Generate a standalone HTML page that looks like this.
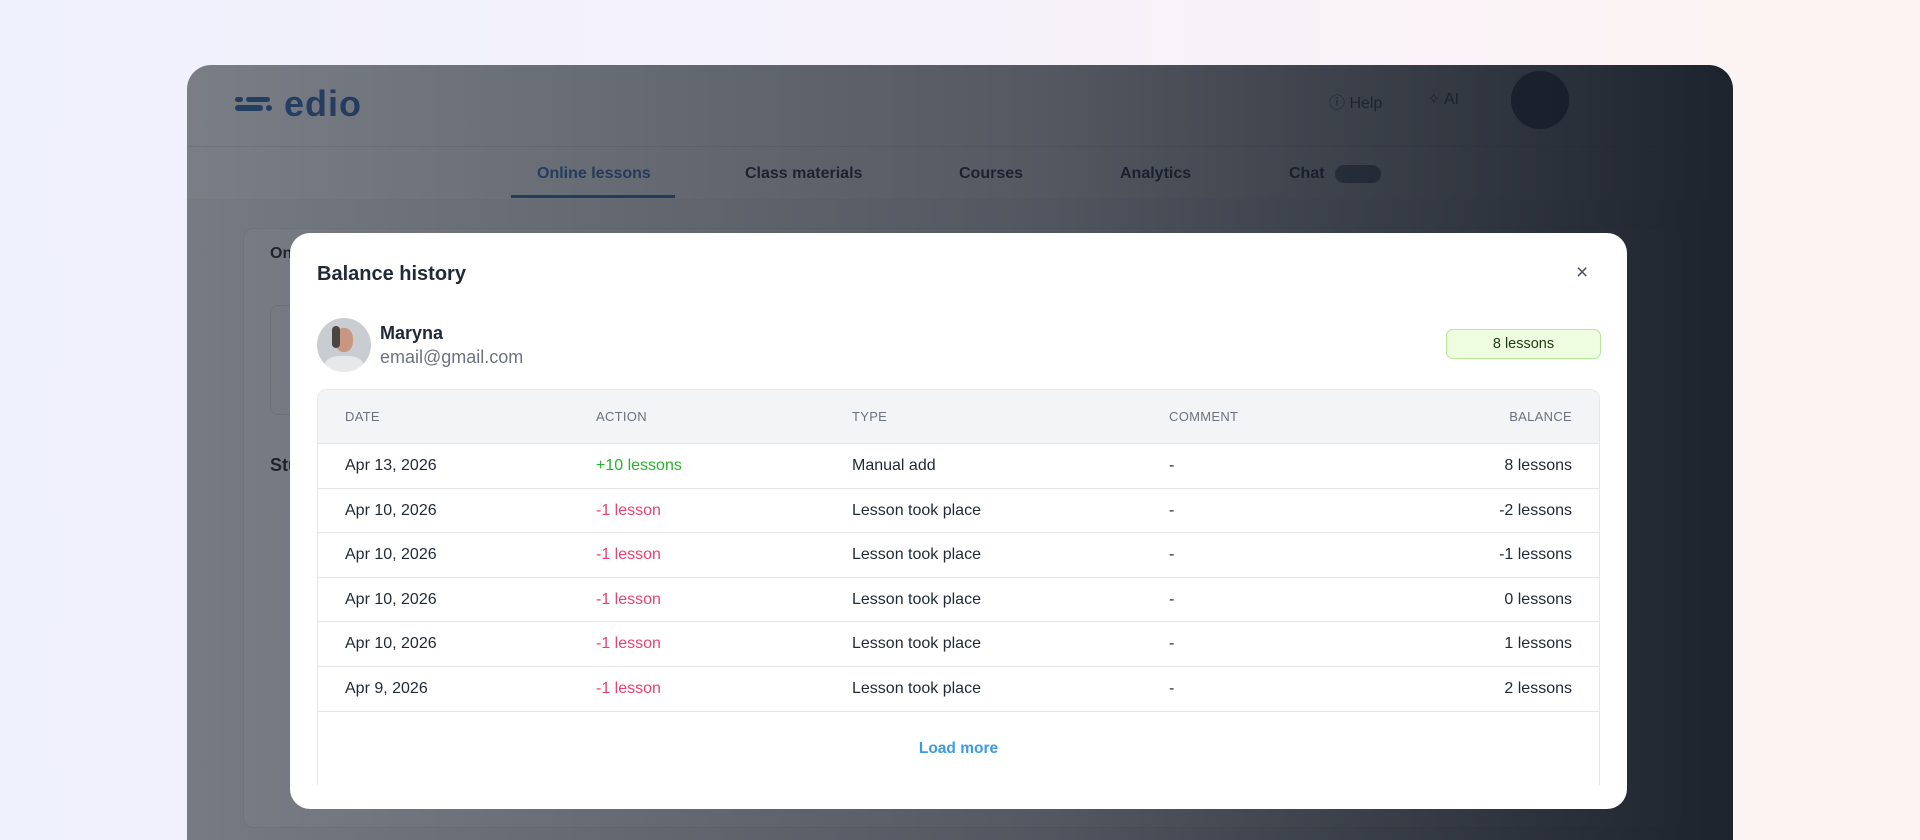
<!DOCTYPE html>
<html><head><meta charset="utf-8"><style>
*{box-sizing:border-box;margin:0;padding:0}
html,body{width:1920px;height:840px;overflow:hidden}
body{font-family:"Liberation Sans",sans-serif;background:linear-gradient(90deg,#eff1fd 0%,#f6f2fb 50%,#fdf3f1 100%);position:relative}
.app{position:absolute;left:187px;top:65px;width:1546px;height:775px;border-radius:24px 24px 0 0;background:#f5f6f8;overflow:hidden}
.hdr{position:absolute;left:0;top:0;right:0;height:82px;background:#fff;border-bottom:1px solid #e5e7eb}
.nav{position:absolute;left:0;right:0;top:82px;height:52px;background:#fff}
.nav span{position:absolute;top:18px;font-size:16px;font-weight:bold;color:#111827}
.card{position:absolute;left:56px;top:163px;width:1440px;height:600px;background:#fff;border:1px solid #e5e7eb;border-radius:10px}
.ov{position:absolute;inset:0;background:linear-gradient(90deg,rgba(40,46,58,.62) 0%,rgba(30,36,48,.76) 55%,rgba(22,28,38,.97) 100%)}
.modal{position:absolute;left:290px;top:233px;width:1337px;height:576px;background:#fff;border-radius:20px;overflow:hidden}
.t{position:absolute;white-space:nowrap}
.tbl{position:absolute;left:27px;top:156px;width:1283px;height:396px;border:1px solid #e3e6eb;border-bottom:none;border-radius:10px 10px 0 0;overflow:hidden}
.th{height:54px;background:#f3f4f6;position:relative;border-bottom:1px solid #e3e6eb}
.th span{position:absolute;top:19px;font-size:13px;color:#6b7280;letter-spacing:.3px}
.tr{height:44.6px;position:relative;border-bottom:1px solid #e3e6eb;font-size:16px;color:#1f2937}
.tr span{position:absolute;top:13px}
.c1{left:27px}.c2{left:278px}.c3{left:534px}.c4{left:851px}.c5{right:27px}
.g{color:#27b32c}.r{color:#ee3f6e}
</style></head><body>
<div class="app">
 <div class="hdr">
  <svg style="position:absolute;left:48px;top:30px" width="40" height="18"><rect x="0" y="2" width="8" height="5" rx="2.5" fill="#1f5ba8"/><rect x="11" y="2" width="24" height="5" rx="2.5" fill="#1f5ba8"/><rect x="0" y="10" width="28" height="6" rx="3" fill="#1f5ba8"/><rect x="31" y="10" width="6" height="6" rx="3" fill="#1f5ba8"/></svg>
  <span class="t" style="left:97px;top:18px;font-size:36px;font-weight:bold;color:#1f5ba8;letter-spacing:1px">edio</span>
  <span class="t" style="left:1142px;top:24px;font-size:16px;color:#374151">ⓘ Help</span>
  <span class="t" style="left:1240px;top:24px;font-size:16px;color:#374151">✧ AI</span>
  <div style="position:absolute;left:1324px;top:6px;width:58px;height:58px;border-radius:50%;background:#2c3a4f"></div>
 </div>
 <div class="nav">
  <span style="left:350px;color:#2563b5">Online lessons</span>
  <div style="position:absolute;left:324px;top:48px;width:164px;height:3px;background:#2563b5"></div>
  <span style="left:558px">Class materials</span>
  <span style="left:772px">Courses</span>
  <span style="left:933px">Analytics</span>
  <span style="left:1102px">Chat</span>
  <div style="position:absolute;left:1148px;top:18px;width:46px;height:18px;border-radius:9px;background:#6b7280"></div>
 </div>
 <div class="card">
  <span class="t" style="left:26px;top:16px;font-size:16px;font-weight:bold;color:#111">Online</span>
  <div style="position:absolute;left:26px;top:76px;width:300px;height:110px;border:1px solid #e5e7eb;border-radius:8px"></div>
  <span class="t" style="left:26px;top:226px;font-size:18px;font-weight:bold;color:#111">Students</span>
 </div>
 <div class="ov"></div>
</div>
<div class="modal">
 <span class="t" style="left:27px;top:30px;font-size:20px;font-weight:bold;color:#1f2937">Balance history</span>
 <span class="t" style="left:1286px;top:28px;font-size:21px;color:#4b5563">×</span>
 <div style="position:absolute;left:27px;top:85px;width:54px;height:54px;border-radius:50%;overflow:hidden;background:#c9cdd1">
  <div style="position:absolute;left:18px;top:10px;width:18px;height:24px;border-radius:45%;background:#c9967f"></div>
  <div style="position:absolute;left:15px;top:8px;width:8px;height:22px;border-radius:4px;background:#4a4542"></div>
  <div style="position:absolute;left:8px;top:38px;width:38px;height:20px;border-radius:40% 40% 0 0;background:#e7e8ea"></div>
 </div>
 <span class="t" style="left:90px;top:90px;font-size:18px;font-weight:bold;color:#1f2937">Maryna</span>
 <span class="t" style="left:90px;top:114px;font-size:18px;color:#6b7280">email@gmail.com</span>
 <div style="position:absolute;left:1156px;top:96px;width:155px;height:30px;border:1px solid #b3eb94;background:#eefcdf;border-radius:7px;text-align:center;font-size:14.5px;line-height:28px;color:#1f3b12">8 lessons</div>
 <div class="tbl">
  <div class="th"><span class="c1">DATE</span><span class="c2">ACTION</span><span class="c3">TYPE</span><span class="c4">COMMENT</span><span class="c5">BALANCE</span></div>
  <div class="tr"><span class="c1">Apr 13, 2026</span><span class="c2 g">+10 lessons</span><span class="c3">Manual add</span><span class="c4">-</span><span class="c5">8 lessons</span></div>
  <div class="tr"><span class="c1">Apr 10, 2026</span><span class="c2 r">-1 lesson</span><span class="c3">Lesson took place</span><span class="c4">-</span><span class="c5">-2 lessons</span></div>
  <div class="tr"><span class="c1">Apr 10, 2026</span><span class="c2 r">-1 lesson</span><span class="c3">Lesson took place</span><span class="c4">-</span><span class="c5">-1 lessons</span></div>
  <div class="tr"><span class="c1">Apr 10, 2026</span><span class="c2 r">-1 lesson</span><span class="c3">Lesson took place</span><span class="c4">-</span><span class="c5">0 lessons</span></div>
  <div class="tr"><span class="c1">Apr 10, 2026</span><span class="c2 r">-1 lesson</span><span class="c3">Lesson took place</span><span class="c4">-</span><span class="c5">1 lessons</span></div>
  <div class="tr"><span class="c1">Apr 9, 2026</span><span class="c2 r">-1 lesson</span><span class="c3">Lesson took place</span><span class="c4">-</span><span class="c5">2 lessons</span></div>
  <div style="text-align:center;padding-top:28px;font-size:15.5px;font-weight:bold;color:#3b9be8">Load more</div>
 </div>
</div>
</body></html>
